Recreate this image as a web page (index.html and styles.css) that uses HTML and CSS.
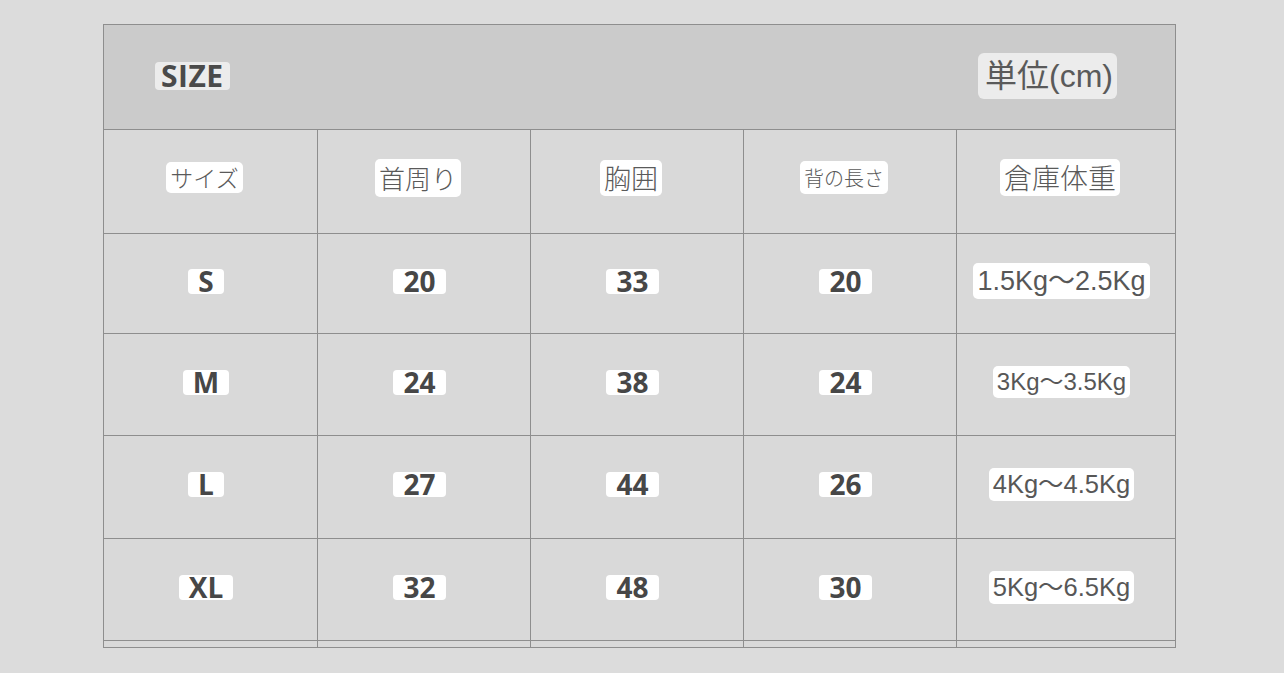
FILE: index.html
```html
<!DOCTYPE html>
<html lang="ja">
<head>
<meta charset="utf-8">
<title>サイズ表</title>
<link rel="stylesheet" href="styles.css">
</head>
<body>
<div class="page">
  <div class="chart">
    <div class="cell head-row">
      <span class="tag tag-size">SIZE</span>
      <span class="tag tag-unit">単位(cm)</span>
    </div>

    <div class="cell colhead"><span class="tag jp jp-24">サイズ</span></div>
    <div class="cell colhead"><span class="tag jp jp-26">首周り</span></div>
    <div class="cell colhead"><span class="tag jp jp-27">胸囲</span></div>
    <div class="cell colhead"><span class="tag jp jp-20">背の長さ</span></div>
    <div class="cell colhead"><span class="tag jp jp-29">倉庫体重</span></div>

    <div class="cell"><span class="tag num">S</span></div>
    <div class="cell"><span class="tag num">20</span></div>
    <div class="cell"><span class="tag num">33</span></div>
    <div class="cell"><span class="tag num">20</span></div>
    <div class="cell"><span class="tag kg kg-28">1.5Kg〜2.5Kg</span></div>

    <div class="cell"><span class="tag num">M</span></div>
    <div class="cell"><span class="tag num">24</span></div>
    <div class="cell"><span class="tag num">38</span></div>
    <div class="cell"><span class="tag num">24</span></div>
    <div class="cell"><span class="tag kg kg-24">3Kg〜3.5Kg</span></div>

    <div class="cell"><span class="tag num">L</span></div>
    <div class="cell"><span class="tag num">27</span></div>
    <div class="cell"><span class="tag num">44</span></div>
    <div class="cell"><span class="tag num">26</span></div>
    <div class="cell"><span class="tag kg kg-26">4Kg〜4.5Kg</span></div>

    <div class="cell"><span class="tag num">XL</span></div>
    <div class="cell"><span class="tag num">32</span></div>
    <div class="cell"><span class="tag num">48</span></div>
    <div class="cell"><span class="tag num">30</span></div>
    <div class="cell"><span class="tag kg kg-26">5Kg〜6.5Kg</span></div>

    <div class="cell tail"></div>
    <div class="cell tail"></div>
    <div class="cell tail"></div>
    <div class="cell tail"></div>
    <div class="cell tail"></div>
  </div>
</div>
</body>
</html>
```

FILE: styles.css
```css
* { box-sizing: border-box; }

html, body {
  margin: 0;
  padding: 0;
  background: #dcdcdc;
}

body {
  width: 1284px;
  height: 673px;
  overflow: hidden;
  font-family: "Liberation Sans", "Noto Sans CJK JP", sans-serif;
}

.page {
  padding: 24px 0 0 103px;
}

.chart {
  display: grid;
  grid-template-columns: 213px 212px 212px 212px 218px;
  grid-template-rows: 104px 103px 99px 101px 102px 101px 6px;
  gap: 1px;
  padding: 1px;
  width: 1073px;
  background: #8e8e8e;
}

.cell {
  background: #d9d9d9;
  display: flex;
  align-items: center;
  justify-content: center;
  padding: 0 9px 5px 0;
}

.colhead {
  padding: 0 12px 8px 0;
}

.tail {
  padding: 0;
}

.head-row {
  grid-column: 1 / -1;
  background: #cbcbcb;
  justify-content: space-between;
  padding: 0 58px 2px 51px;
}

.tag {
  background: #f4f4f4;
  border-radius: 4px;
  color: #555;
  white-space: nowrap;
}

.tag-size {
  font-family: "Open Sans", sans-serif;
  font-weight: 700;
  font-size: 30px;
  line-height: 28px;
  padding: 0 6px;
  letter-spacing: 0.5px;
  color: #4a4a4a;
  background: #ececec;
}

.tag-unit {
  font-size: 32px;
  line-height: 46px;
  padding: 0 4px 0 7px;
  color: #5a5a5a;
  background: #ececec;
  border-radius: 6px;
}

.jp {
  font-family: "Noto Sans CJK JP", "Liberation Sans", sans-serif;
  font-weight: 300;
  background: #ffffff;
  color: #5a5a5a;
  border-radius: 5px;
  padding: 0 4px;
}

.jp-20 { font-size: 20px; line-height: 33px; }
.jp-24 { font-size: 23px; line-height: 31px; }
.jp-26 { font-size: 26px; line-height: 38px; }
.jp-27 { font-size: 27px; line-height: 36px; }
.jp-29 { font-size: 28px; line-height: 37px; }

.num {
  font-family: "Open Sans", sans-serif;
  font-weight: 700;
  font-size: 28px;
  line-height: 25px;
  padding: 0 10px;
  color: #474747;
  background: #ffffff;
}

.kg {
  background: #ffffff;
  color: #575757;
  border-radius: 5px;
  padding: 0 4px;
}

.kg-28 { font-size: 27px; line-height: 36px; }
.kg-24 { font-size: 24px; line-height: 32px; }
.kg-26 { font-size: 25.5px; line-height: 33px; }
```
